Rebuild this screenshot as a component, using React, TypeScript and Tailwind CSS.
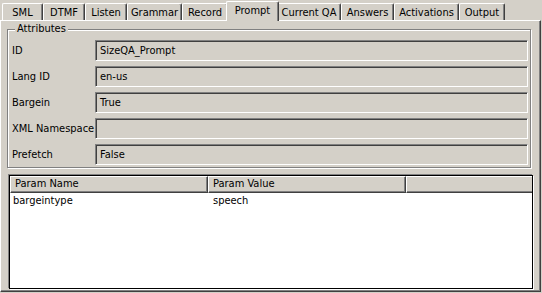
import React from "react";

const tabs = [
  { label: "SML", w: "w-[41px]" },
  { label: "DTMF", w: "w-[42px]" },
  { label: "Listen", w: "w-[42px]" },
  { label: "Grammar", w: "w-[55px]" },
  { label: "Record", w: "w-[46px]" },
  { label: "Prompt", w: "w-[53px]", active: true },
  { label: "Current QA", w: "w-[64px]" },
  { label: "Answers", w: "w-[53px]" },
  { label: "Activations", w: "w-[65px]" },
  { label: "Output", w: "w-[46px]" },
];

const attributes = [
  { label: "ID", value: "SizeQA_Prompt" },
  { label: "Lang ID", value: "en-us" },
  { label: "Bargein", value: "True" },
  { label: "XML Namespace", value: "" },
  { label: "Prefetch", value: "False" },
];

function Tab({ label, w, active }: { label: string; w: string; active?: boolean }) {
  if (active) {
    return (
      <div
        className={`${w} relative z-10 -mx-[2px] -mb-[1px] h-[20px] rounded-t-[2px] border-l border-t border-r border-l-white border-t-white border-r-[#404040] bg-[#d4d0c8] text-center leading-[13px] pt-[2px] whitespace-nowrap shadow-[inset_-1px_0_0_#808080]`}
      >
        {label}
      </div>
    );
  }
  return (
    <div
      className={`${w} h-[17px] rounded-t-[2px] border-l border-t border-r border-l-white border-t-white border-r-[#404040] text-center leading-[13px] pt-[2px] whitespace-nowrap shadow-[inset_-1px_0_0_#808080]`}
    >
      {label}
    </div>
  );
}

export default function App() {
  return (
    <div className="w-[542px] h-[293px] overflow-hidden bg-[#d4d0c8] text-[11px] text-black font-['DejaVu_Sans_Condensed','Liberation_Sans',sans-serif]">
      {/* Tab strip */}
      <div className="flex items-end h-[20px] pl-[2px]">
        {tabs.map((t) => (
          <Tab key={t.label} {...t} />
        ))}
      </div>

      {/* Tab page */}
      <div className="w-[541px] h-[272px] border-t border-l border-r border-b border-t-white border-l-white border-r-[#404040] border-b-[#404040] shadow-[inset_-1px_-1px_0_#808080] pt-[8px] pl-[6px]">
        {/* Attributes group */}
        <div className="relative w-[524px] h-[139px] border border-[#808080] shadow-[inset_1px_1px_0_white,1px_1px_0_white] pt-[10px] pb-[2px] pl-[4px] pr-[2px]">
          <span className="absolute -top-[8px] left-[7px] bg-[#d4d0c8] px-[2px] leading-[14px]">
            Attributes
          </span>
          <div className="flex flex-col gap-[5px]">
            {attributes.map((a) => (
              <div key={a.label} className="flex items-center h-[21px]">
                <div className="w-[83px] shrink-0 leading-[17px] whitespace-nowrap">{a.label}</div>
                <div className="flex-1 h-[21px] border border-t-[#808080] border-l-[#808080] border-b-white border-r-white shadow-[inset_1px_1px_0_#404040,inset_-1px_-1px_0_#d4d0c8] pl-[4px] pt-[1px] leading-[17px]">
                  {a.value}
                </div>
              </div>
            ))}
          </div>
        </div>

        {/* Params table */}
        <div className="mt-[7px] ml-[2px] w-[524px] h-[114px] border border-black bg-white shadow-[-1px_-1px_0_#808080,1px_1px_0_white] flex flex-col">
          <div className="flex h-[17px] bg-[#d4d0c8]">
            <div className="w-[198px] border-t border-l border-r border-b border-t-white border-l-white border-r-[#404040] border-b-[#404040] shadow-[inset_-1px_-1px_0_#808080] pl-[4px] leading-[14px]">
              Param Name
            </div>
            <div className="w-[198px] border-t border-l border-r border-b border-t-white border-l-white border-r-[#404040] border-b-[#404040] shadow-[inset_-1px_-1px_0_#808080] pl-[4px] leading-[14px]">
              Param Value
            </div>
            <div className="flex-1 border-t border-l border-b border-t-white border-l-white border-b-[#404040] shadow-[inset_0_-1px_0_#808080]" />
          </div>
          <div className="flex h-[16px] leading-[16px]">
            <div className="w-[198px] pl-[3px]">bargeintype</div>
            <div className="w-[198px] pl-[5px]">speech</div>
          </div>
        </div>
      </div>
    </div>
  );
}
